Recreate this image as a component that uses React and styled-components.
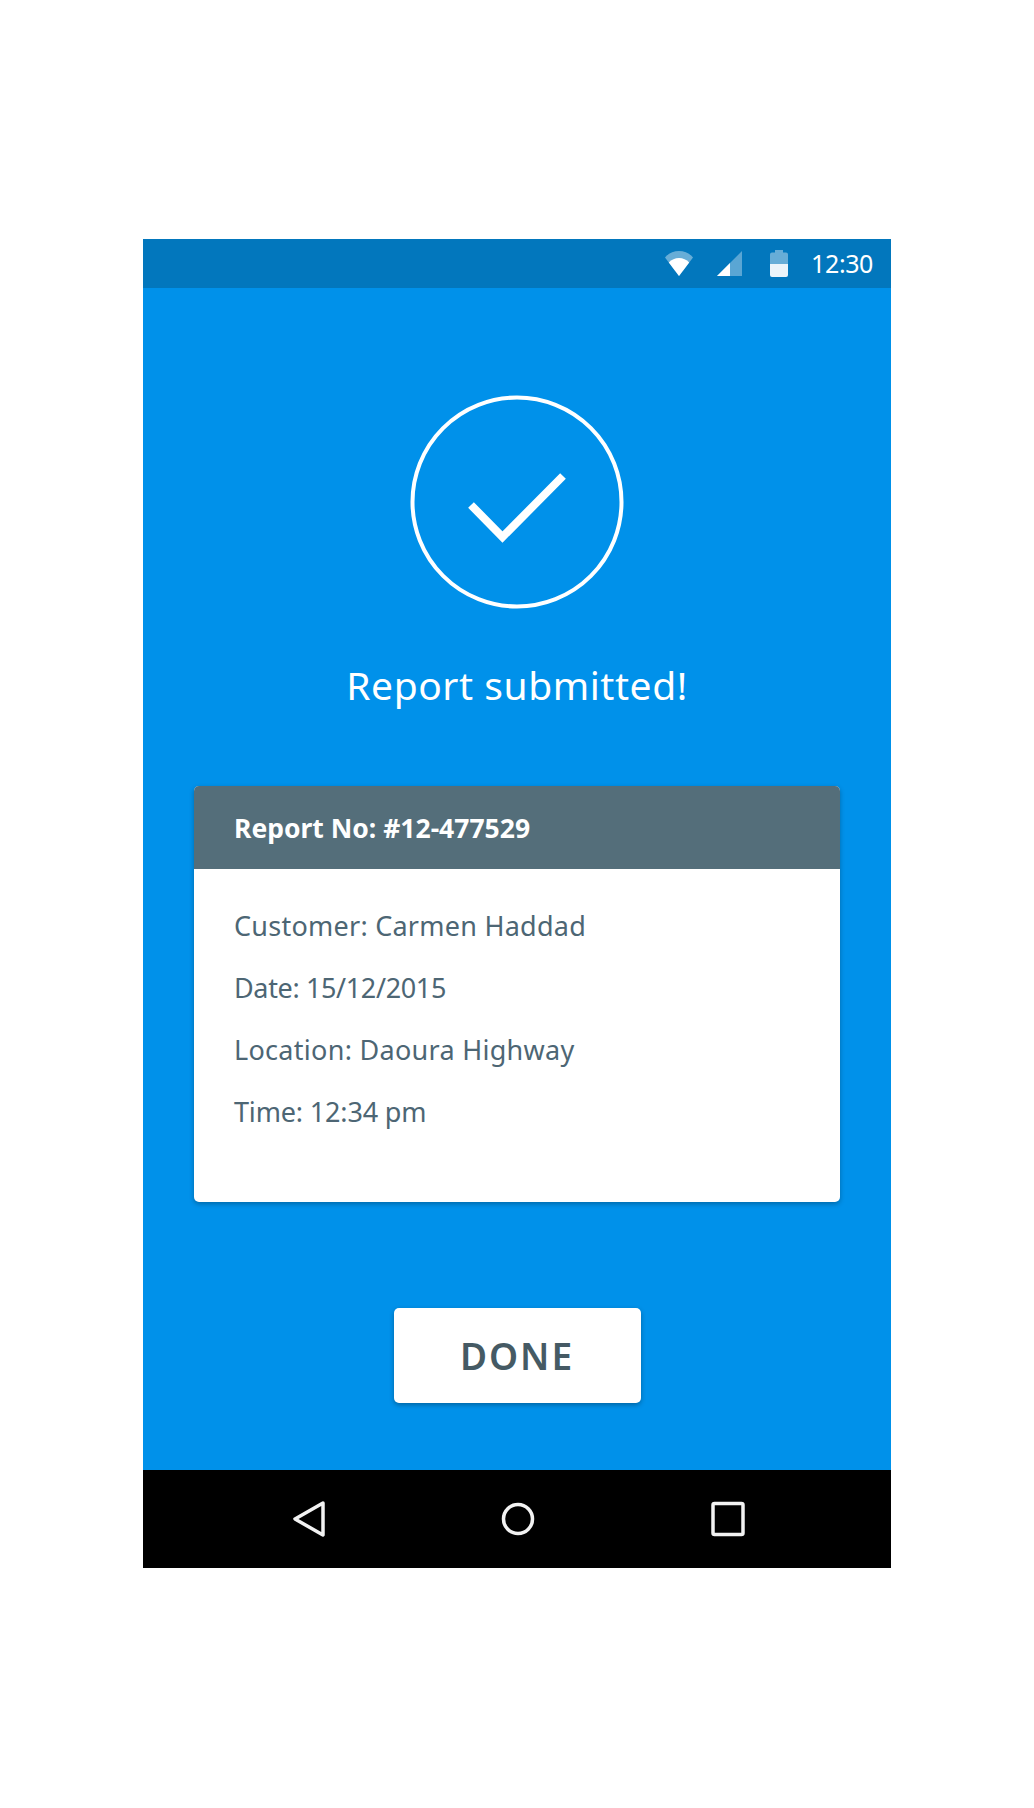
import React from 'react';
import styled, { createGlobalStyle } from 'styled-components';

const GlobalStyle = createGlobalStyle`
  body {
    margin: 0;
    background: #fff;
    font-family: "Noto Sans", "Open Sans", sans-serif;
  }
`;

const Page = styled.div`
  width: 1034px;
  height: 1808px;
  padding: 239px 0 0 143px;
  box-sizing: border-box;
`;

const Phone = styled.div`
  width: 748px;
  height: 1329px;
  display: flex;
  flex-direction: column;
  background: #0091ea;
`;

const StatusBar = styled.div`
  height: 49px;
  flex: none;
  background: #0277bd;
  display: flex;
  align-items: center;
  justify-content: flex-end;
  padding: 0 18px 0 0;
  color: #fff;
`;

const StatusIcon = styled.svg`
  display: block;
  margin-right: ${(p) => p.$gap}px;
`;

const Clock = styled.span`
  font-size: 25px;
  line-height: 49px;
  letter-spacing: -0.4px;
`;

const Main = styled.main`
  flex: 1;
  display: flex;
  flex-direction: column;
  align-items: center;
  padding-top: 107px;
`;

const Badge = styled.svg`
  display: block;
`;

const Title = styled.h1`
  margin: 50px 0 0;
  font-size: 39px;
  line-height: 52px;
  font-weight: 400;
  letter-spacing: 0.55px;
  color: #fff;
`;

const Card = styled.section`
  width: 646px;
  height: 416px;
  margin-top: 75px;
  border-radius: 5px;
  overflow: hidden;
  background: #fff;
  box-shadow: 0 2px 5px rgba(0, 0, 0, 0.28);
`;

const CardHeader = styled.h2`
  margin: 0;
  height: 83px;
  padding: 0 40px;
  display: flex;
  align-items: center;
  background: #546e7a;
  color: #fff;
  font-size: 26.5px;
  font-weight: 700;
`;

const CardBody = styled.div`
  padding: 38px 40px 0;
  display: flex;
  flex-direction: column;
  gap: 24px;
`;

const Row = styled.div`
  font-size: 27px;
  line-height: 38px;
  letter-spacing: ${(p) => p.$tracking}px;
  color: #4d6674;
`;

const DoneButton = styled.button`
  width: 247px;
  height: 95px;
  margin-top: 106px;
  border: 0;
  border-radius: 5px;
  background: #fff;
  color: #455a64;
  font-family: inherit;
  font-size: 37px;
  font-weight: 600;
  letter-spacing: 2px;
  box-shadow: 0 2px 5px rgba(0, 0, 0, 0.3);
`;

const NavBar = styled.nav`
  height: 98px;
  flex: none;
  background: #000;
  display: flex;
  align-items: center;
  justify-content: center;
  gap: 174px;
  padding-left: 2px;
`;

const NavIcon = styled.svg`
  display: block;
  width: 36px;
  height: 38px;
  fill: none;
  stroke: #f2f2f2;
  stroke-width: 3.5;
  stroke-linejoin: round;
`;

const WifiIcon = () => (
  <StatusIcon $gap={24} width="28" height="25" viewBox="0 0 28 25">
    <path d="M14 25 0 6.500C3.500 2.300 8.500 0 14 0s10.500 2.300 14 6.500z" fill="#fff" fillOpacity="0.4" />
    <path d="M14 25 3.800 11.500C6.500 8.600 10 7 14 7s7.500 1.600 10.200 4.500z" fill="#fff" />
  </StatusIcon>
);

const SignalIcon = () => (
  <StatusIcon $gap={28} width="25" height="25" viewBox="0 0 25 25">
    <path d="M0 25 25 0v25z" fill="#fff" fillOpacity="0.35" />
    <path d="M0 25 13 12v13z" fill="#fff" />
  </StatusIcon>
);

const BatteryIcon = () => (
  <StatusIcon $gap={23} width="18" height="27" viewBox="0 0 18 27">
    <path d="M5 0h8v2.500h3a2 2 0 0 1 2 2V14H0V4.500a2 2 0 0 1 2-2h3z" fill="#fff" fillOpacity="0.4" />
    <path d="M0 14h18v11a2 2 0 0 1-2 2H2a2 2 0 0 1-2-2z" fill="#fff" fillOpacity="0.92" />
  </StatusIcon>
);

const rows = [
  { text: 'Customer: Carmen Haddad', tracking: 0.25 },
  { text: 'Date: 15/12/2015', tracking: -0.36 },
  { text: 'Location: Daoura Highway', tracking: 0.29 },
  { text: 'Time: 12:34 pm', tracking: -0.16 },
];

const App = () => {
  return (
    <Page>
      <GlobalStyle />
      <Phone>
        <StatusBar>
          <WifiIcon />
          <SignalIcon />
          <BatteryIcon />
          <Clock>12:30</Clock>
        </StatusBar>
        <Main>
          <Badge width="214" height="214" viewBox="0 0 214 214" fill="none" stroke="#fff">
            <circle cx="107" cy="107" r="104.500" strokeWidth="4" />
            <path d="M61 110 92.500 142 153 81" strokeWidth="8" />
          </Badge>
          <Title>Report submitted!</Title>
          <Card>
            <CardHeader>Report No: #12-477529</CardHeader>
            <CardBody>
              {rows.map((row) => (
                <Row key={row.text} $tracking={row.tracking}>{row.text}</Row>
              ))}
            </CardBody>
          </Card>
          <DoneButton>DONE</DoneButton>
        </Main>
        <NavBar>
          <NavIcon viewBox="0 0 36 38">
            <path d="M33 3 5 19 33 35z" />
          </NavIcon>
          <NavIcon viewBox="0 0 36 38">
            <circle cx="18" cy="19" r="14.500" />
          </NavIcon>
          <NavIcon viewBox="0 0 36 38">
            <rect x="3" y="3.500" width="30" height="31" rx="1.500" />
          </NavIcon>
        </NavBar>
      </Phone>
    </Page>
  );
};

export default App;
